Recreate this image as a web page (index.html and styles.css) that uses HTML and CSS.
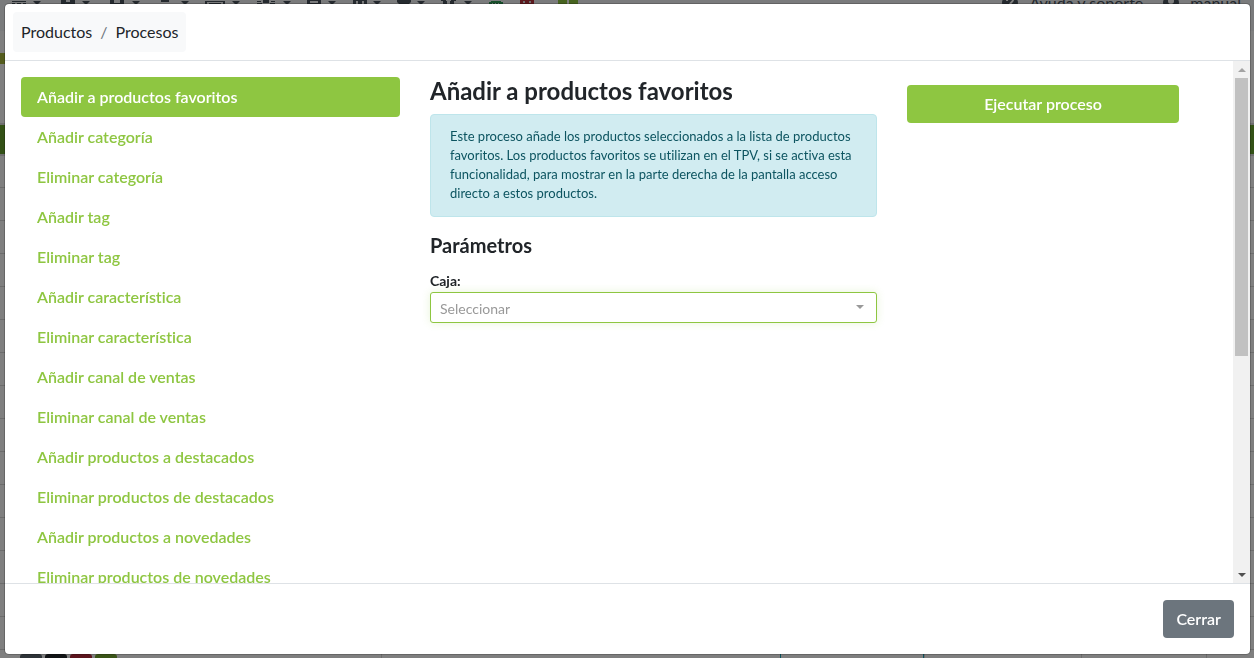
FILE: index.html
```html
<!DOCTYPE html>
<html lang="es">
<head>
  <meta charset="utf-8">
  <title>Productos / Procesos</title>
  <link rel="stylesheet" href="styles.css">
</head>
<body>
  <div class="page" aria-hidden="true">
    <div class="topbar">
      <svg class="menu-icons" width="600" height="4" viewBox="0 0 600 4">
        <g fill="#4a545e">
          <path d="M12 1h14v1H12zM12 3h3v1h-3zM17 3h4v1h-4zM23 3h3v1h-3zM61 0h5v2h4V0h5v4H61zM110 0h4v3h6V0h4v4h-14zM161 0h8v2h-8zM205 1h20v1h-20zM205 2h2v2h-2zM209 3h12v1h-12zM223 2h2v2h-2zM257 1h4v1h-4zM257 3h5v1h-5zM263 0h6v3h-6zM271 1h4v1h-4zM270 3h5v1h-5zM307 0h14v1h-14zM307 3h14v1h-14zM307 1h3v2h-3zM318 1h3v2h-3zM353 0h14v1h-14zM353 1h3v3h-3zM358 1h4v3h-4zM364 1h3v3h-3zM397 0h14v2l-2 2h-10l-2-2zM441 0h5v1h-5zM443 1h4v3h-4zM450 1h4v3h-4zM451 0h5v1h-5z"/>
          <path d="M33 1h8l-4 4zM82 1h8l-4 4zM132 1h8l-4 4zM181 1h8l-4 4zM232 1h8l-4 4zM283 1h8l-4 4zM328 1h8l-4 4zM373 1h8l-4 4zM417 1h8l-4 4zM464 1h8l-4 4z"/>
        </g>
        <path d="M491 1h10v1h2v2h-14V2h2z" fill="#2f9e57"/>
        <path d="M492 3h1v1h-1zM495 3h1v1h-1zM498 3h1v1h-1z" fill="#fff"/>
        <path d="M520 0h14v4h-14z" fill="#b8323c"/>
        <path d="M523 1h2v2h-2zM529 1h2v2h-2z" fill="#ddd"/>
        <path d="M558 0h20v4h-20z" fill="#8ec641"/>
        <path d="M567 0h2v4h-2z" fill="#fff"/>
      </svg>
      <div class="user-menu">
        <svg class="menu-icon" width="16" height="16" viewBox="0 0 16 16">
          <circle cx="8" cy="8" r="8" fill="#4a545e"/>
          <path d="M5 6c0-4 6-4 6-1 0 2-3 2-3 5M8 11v2" fill="none" stroke="#fff" stroke-width="2"/>
        </svg>
        <span>Ayuda y soporte</span>
        <svg class="menu-icon user" width="16" height="16" viewBox="0 0 16 16">
          <circle cx="8" cy="8" r="8" fill="#4a545e"/>
          <path d="M8 3a3 3 0 0 1 0 6 3 3 0 0 1 0-6zM3 13c1-4 9-4 10 0z" fill="#fff"/>
        </svg>
        <span>manual</span>
      </div>
    </div>
    <div class="page-title"></div>
    <div class="grid-head"></div>
    <div class="grid-rows"></div>
    <div class="grid-foot">
      <i class="chip slate"></i><i class="chip black"></i><i class="chip red"></i><i class="chip green"></i>
      <div class="cells"><i></i><i class="focused"></i><i></i><i></i><i></i></div>
    </div>
  </div>

  <div class="backdrop">
    <div class="modal" role="dialog" aria-label="Procesos">
      <div class="modal-header">
        <nav class="breadcrumb">
          <a href="#">Productos</a>
          <span class="separator">/</span>
          <a href="#">Procesos</a>
        </nav>
      </div>

      <div class="modal-body">
        <div class="content">
          <nav class="process-list">
            <a class="active" href="#">Añadir a productos favoritos</a>
            <a href="#">Añadir categoría</a>
            <a href="#">Eliminar categoría</a>
            <a href="#">Añadir tag</a>
            <a href="#">Eliminar tag</a>
            <a href="#">Añadir característica</a>
            <a href="#">Eliminar característica</a>
            <a href="#">Añadir canal de ventas</a>
            <a href="#">Eliminar canal de ventas</a>
            <a href="#">Añadir productos a destacados</a>
            <a href="#">Eliminar productos de destacados</a>
            <a href="#">Añadir productos a novedades</a>
            <a href="#">Eliminar productos de novedades</a>
          </nav>

          <div class="process">
            <h4>Añadir a productos favoritos</h4>
            <div class="alert">Este proceso añade los productos seleccionados a la lista de productos favoritos. Los productos favoritos se utilizan en el TPV, si se activa esta funcionalidad, para mostrar en la parte derecha de la pantalla acceso directo a estos productos.</div>
            <h5>Parámetros</h5>
            <label for="caja">Caja:</label>
            <div class="select-wrap">
              <select id="caja">
                <option>Seleccionar</option>
              </select>
            </div>
          </div>

          <div class="actions">
            <button type="button" class="button primary">Ejecutar proceso</button>
          </div>
        </div>

        <div class="scrollbar">
          <span class="arrow up"></span>
          <div class="track"><div class="thumb"></div></div>
          <span class="arrow down"></span>
        </div>
      </div>

      <div class="modal-footer">
        <button type="button" class="button secondary">Cerrar</button>
      </div>
    </div>
  </div>
</body>
</html>
```
FILE: styles.css
```css
* {
  box-sizing: border-box;
}

body {
  margin: 0;
  font-family: Lato, "Liberation Sans", sans-serif;
  font-size: 16px;
  line-height: 24px;
  font-variant-ligatures: none;
  color: #212529;
  overflow: hidden;
}

a {
  text-decoration: none;
}

/* Page behind the modal */
.page {
  display: flex;
  flex-direction: column;
  height: 100vh;
  background-color: #fff;
}

.topbar {
  display: flex;
  justify-content: space-between;
  height: 31px;
  margin-bottom: 22px;
  background-color: #f4f6f8;
}

.user-menu {
  display: flex;
  gap: 11px;
  height: 24px;
  margin-top: -9px;
  padding-right: 13px;
  color: #4a545e;
}

.menu-icon {
  margin-top: 4px;
}

.menu-icon.user {
  margin-left: 9px;
}

.page-title {
  width: 5px;
  height: 11px;
  margin-bottom: 59px;
  background-color: #a9b83a;
}

.grid-head {
  height: 33px;
  border: solid #ddd;
  border-width: 2px 0;
  background-color: #66a32c;
}

.grid-rows {
  flex: 1;
  background: repeating-linear-gradient(#fff 0, #fff 31px, #d8d8d8 31px, #d8d8d8 32px, #fff 32px, #fff 33px);
}

.grid-foot {
  display: flex;
  gap: 3px;
  height: 4px;
  padding-left: 20px;
}

.chip {
  width: 22px;
  border-radius: 3px 3px 0 0;
}

.slate {
  background-color: #5c6770;
}

.black {
  background-color: #23272b;
}

.red {
  background-color: #b82a3a;
}

.green {
  background-color: #74a82f;
}

.cells {
  display: grid;
  grid-template-columns: 399fr 143fr 157fr 125fr 48fr;
  flex: 1;
  margin-left: 261px;
}

.cells i {
  border-left: 1px solid #d8d8d8;
}

.cells .focused {
  border-color: #17a2b8;
  border-right: 1px solid #17a2b8;
}

/* Modal */
.backdrop {
  position: fixed;
  inset: 0;
  padding: 3px 3px 3px 4px;
  background-color: rgba(0, 0, 0, .5);
}

.modal {
  display: flex;
  flex-direction: column;
  height: 100%;
  overflow: hidden;
  background-color: #fff;
  background-clip: padding-box;
  border: 1px solid rgba(0, 0, 0, .2);
  border-radius: 5px;
}

.modal-header {
  display: flex;
  padding: 8px;
  border-bottom: 1px solid #dee2e6;
}

.breadcrumb {
  display: flex;
  gap: 8px;
  padding: 8px;
  background-color: #f8f9fa;
  border-radius: 4px;
}

.breadcrumb a {
  color: #212529;
}

.separator {
  color: #6c757d;
}

.modal-body {
  display: flex;
  flex: 1;
  min-height: 0;
}

.content {
  display: grid;
  grid-template-columns: 379fr 447fr 272fr;
  column-gap: 30px;
  flex: 1;
  padding: 16px 54px 0 16px;
  overflow: hidden;
}

.process-list a {
  display: block;
  padding: 8px 16px;
  font-weight: 600;
  color: #8ec641;
  border-radius: 4px;
}

.process-list a.active {
  color: #fff;
  background-color: #8ec641;
}

h4, h5 {
  margin: 0 0 8px;
  font-weight: 700;
}

h4 {
  font-size: 24px;
  line-height: 28px;
  padding-bottom: 1px;
}

h5 {
  font-size: 20px;
  line-height: 24px;
}

.alert {
  margin-bottom: 16px;
  padding: 12px 19px 13px;
  font-size: 13px;
  line-height: 19px;
  color: #0c5460;
  background-color: #d1ecf1;
  border: 1px solid #bee5eb;
  border-radius: 4px;
}

label {
  display: block;
  padding: 5px 0 1px;
  font-size: 14px;
  line-height: 21px;
  font-weight: 700;
}

.select-wrap {
  position: relative;
}

.select-wrap:after {
  content: "";
  position: absolute;
  right: 13px;
  top: 13px;
  border: solid transparent;
  border-width: 4px 4px 0;
  border-top-color: #999;
}

select {
  display: block;
  width: 100%;
  height: 31px;
  padding: 2px 9px 0;
  font-family: inherit;
  font-size: 14px;
  color: #999;
  background-color: #fff;
  border: 1px solid #8ec641;
  border-radius: 3px;
  box-shadow: 0 0 8px rgba(142, 198, 65, .2);
  appearance: none;
}

.button {
  height: 38px;
  padding: 0 13px 2px;
  font-family: inherit;
  font-size: 16px;
  font-weight: 600;
  color: #fff;
  border: none;
  border-radius: 4px;
  cursor: pointer;
}

.primary {
  width: 100%;
  margin-top: 8px;
  background-color: #8ec641;
}

.secondary {
  background-color: #6c757d;
}

.modal-footer {
  display: flex;
  justify-content: flex-end;
  padding: 16px;
  border-top: 1px solid #dee2e6;
}

/* Scrollbar */
.scrollbar {
  display: flex;
  flex-direction: column;
  width: 17px;
  background-color: #f1f1f1;
}

.arrow {
  display: flex;
  align-items: center;
  justify-content: center;
  height: 17px;
}

.arrow:before {
  content: "";
  border: solid transparent;
  border-width: 0 4px 4px;
  border-bottom-color: #a3a3a3;
}

.arrow.down:before {
  border-width: 4px 4px 0;
  border-top-color: #505050;
}

.track {
  flex: 1;
  padding: 0 2px;
}

.thumb {
  height: 57%;
  background-color: #c1c1c1;
}
```
